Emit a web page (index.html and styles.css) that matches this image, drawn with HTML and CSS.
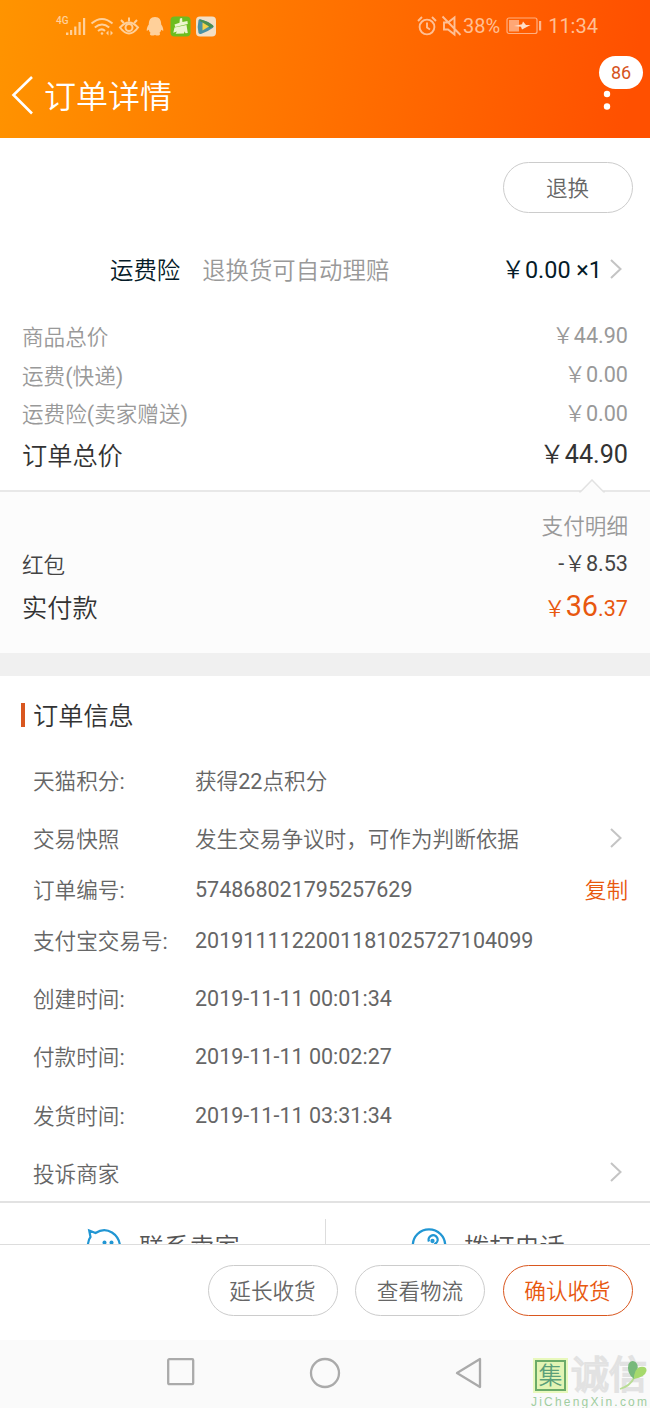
FILE: index.html
```html
<!DOCTYPE html>
<html lang="zh-CN">
<head>
<meta charset="utf-8">
<title>订单详情</title>
<link rel="stylesheet" href="styles.css">
</head>
<body>
<div class="app">
  <header class="header">
    <div class="status">
      <svg class="status-left" width="165" height="24" viewBox="0 0 165 24" fill="none" stroke="#ffd09a">
        <g fill="#ffd09a" stroke="none">
          <rect x="11" y="19.5" width="2.4" height="2.5"/><rect x="15" y="17" width="2.2" height="5"/><rect x="19.200" y="13.500" width="2.200" height="8.500"/><rect x="23.500" y="9" width="2.200" height="13"/><rect x="28" y="5" width="2.200" height="17"/>
        </g>
        <g stroke-width="2">
          <path d="M36.500 10.500q10.500-9 21 0M39.800 14.500q7.200-6 14.400 0M43 18q4-3.200 7 0"/>
          <circle cx="47" cy="20.500" r="1.300" fill="#ffd09a" stroke="none"/>
          <path d="M53.500 17.500v5l-2.500-2.500zM55.500 17.500v5l2.500-2.500z" fill="#ffd09a" stroke="none"/>
          <path d="M65 14.500q9-10 18 0q-9 12-18 0z"/><circle cx="74" cy="14.500" r="3.500"/>
          <path d="M66 7l2.800 3M74 4.500v4M82 7l-2.800 3"/>
        </g>
        <path d="M100 4c-4.500 0-6.200 3-6.200 7.500-1.500 2-2.300 4.300-2 6.500l2-1.200c.3 1.500 1 2.500 1.800 3.200-1.300.8-.8 2.500 1.900 2.500 1.500 0 2.500-.8 2.500-.8s1 .8 2.500.8c2.700 0 3.200-1.700 1.900-2.500.8-.7 1.500-1.700 1.800-3.200l2 1.200c.3-2.200-.5-4.500-2-6.500C106.200 7 104.500 4 100 4z" fill="#ffd09a" stroke="none"/>
        <rect x="115.500" y="3.500" width="20" height="20" rx="4" fill="#6cbd1f" stroke="none"/>
        <path d="M119.500 11.500l5-1.700.4-4.300 2.200-.4.300 4 5-1.200.4 3-12.500 3.200zM119.500 14.500l12-2.600 1.300 8-2.300.3-1-2-.5 2.200-8.400.3 1.300-2.300-3.600 1.300z" fill="#edf5cf" stroke="none"/>
        <rect x="141" y="3.500" width="20" height="20" rx="4" fill="#f3dfc5" stroke="none"/>
        <path d="M143.500 7.200q-1.500 6.500 0 12.800 1 1.500 3 .7 6-2 11.500-6 1-1.200 0-2.400-6-4.500-12.500-6-1.500-.3-2 .9z" fill="#4a91a3" stroke="none"/><path d="M144.500 6.500q7 1 13.500 6l.5 1.500-4 1q-3-4-9-6.500z" fill="#4d8f4b" stroke="none"/><path d="M147.500 9.500v8l6.500-4z" fill="#f2d24a" stroke="none"/>
      </svg>
      <span class="net">4G</span>
      <svg class="alarm" width="46" height="22" viewBox="0 0 46 22" fill="none" stroke="#ffbf94" stroke-width="1.900">
        <circle cx="10" cy="12" r="7.400"/><path d="M10 7.500v5l3 2M1 6l4-4M15 2l4 4"/>
        <path d="M27 7.500h4l6.500-5v17L31 14.500h-4zM25.500 1.500L43.500 20"/>
      </svg>
      <span class="battery-text">38%</span>
      <svg class="battery" width="36" height="18" viewBox="0 0 36 18">
        <rect x="1" y="1" width="30" height="15.500" rx="2" fill="none" stroke="#ffaf80" stroke-width="1.200"/>
        <rect x="3" y="3" width="10" height="11.500" fill="#ffa775"/><path d="M8 9l8-1.800 1-2.700 3 3.500h4.500L16 12.500l-1-2.700z" fill="#ffdfc7"/>
        <rect x="33" y="4" width="2.200" height="9.500" fill="#ffb78c"/>
      </svg>
      <span class="clock">11:34</span>
    </div>
    <div class="titlebar">
      <svg class="back" width="24" height="40" viewBox="0 0 24 40" fill="none" stroke="#fff" stroke-width="2.600"><path d="M21 2L2.500 20 21 38.500"/></svg>
      <h1 class="title">订单详情</h1>
      <svg class="more" width="8" height="34" viewBox="0 0 8 34" fill="#fff"><circle cx="4" cy="4" r="3.200"/><circle cx="4" cy="17" r="3.200"/><circle cx="4" cy="29.500" r="3.200"/></svg>
      <span class="badge">86</span>
    </div>
  </header>

  <div class="refund"><span class="btn">退换</span></div>
  <div class="insurance">
    <span>运费险</span><span class="insurance-note">退换货可自动理赔</span><span class="insurance-price">￥0.00 ×1</span>
    <svg class="arrow" width="12" height="20" viewBox="0 0 12 20"><path d="M1 1l9.500 9L1 19"/></svg>
  </div>

  <section class="costs">
    <div class="cost"><span>商品总价</span><span class="amount">￥44.90</span></div>
    <div class="cost"><span>运费(快递)</span><span class="amount">￥0.00</span></div>
    <div class="cost"><span>运费险(卖家赠送)</span><span class="amount">￥0.00</span></div>
    <div class="cost total"><span>订单总价</span><span class="amount">￥44.90</span></div>
  </section>

  <section class="payment">
    <svg class="notch" width="28" height="14" viewBox="0 0 28 14"><path d="M2 14V12.500L14 1l12 11.500V14z" fill="#fcfcfc"/><path d="M1 12.700h1.500L14 1l11.500 11.700H27" fill="none" stroke="#e2e2e2" stroke-width="1.500"/></svg>
    <div class="detail">支付明细</div>
    <div class="cost dark"><span>红包</span><span class="amount">-￥8.53</span></div>
    <div class="cost paid"><span>实付款</span><span class="amount paid-amount">￥<b class="big">36</b>.37</span></div>
  </section>
  <div class="gap"></div>

  <section class="info">
    <h2 class="info-title">订单信息</h2>
    <div class="row"><span class="label">天猫积分:</span><span>获得22点积分</span></div>
    <div class="row"><span class="label">交易快照</span><span>发生交易争议时，可作为判断依据</span><svg class="arrow" width="12" height="20" viewBox="0 0 12 20"><path d="M1 1l9.500 9L1 19"/></svg></div>
    <div class="row short"><span class="label">订单编号:</span><span class="num">574868021795257629</span><span class="copy">复制</span></div>
    <div class="row"><span class="label">支付宝交易号:</span><span class="num">2019111122001181025727104099</span></div>
    <div class="row"><span class="label">创建时间:</span><span class="num">2019-11-11 00:01:34</span></div>
    <div class="row"><span class="label">付款时间:</span><span class="num">2019-11-11 00:02:27</span></div>
    <div class="row"><span class="label">发货时间:</span><span class="num">2019-11-11 03:31:34</span></div>
    <div class="row"><span class="label">投诉商家</span><svg class="arrow" width="12" height="20" viewBox="0 0 12 20"><path d="M1 1l9.500 9L1 19"/></svg></div>
  </section>

  <div class="contact">
    <div class="contact-item">
      <svg width="36" height="36" viewBox="0 0 36 36" fill="none" stroke="#2196d3" stroke-width="2.200"><path d="M1.800 19Q1.800 12 4.500 9L3.200 2.500 9.500 5Q18-.5 26 4.500 33 9 34 17.500A16 16 0 0 1 2 22"/><g fill="#2196d3" stroke="none"><circle cx="18.500" cy="14.500" r="2"/><circle cx="25.500" cy="14.500" r="2"/></g></svg>
      <span>联系卖家</span>
    </div>
    <div class="contact-item divided">
      <svg width="36" height="36" viewBox="0 0 36 36" fill="none" stroke="#2196d3" stroke-width="2.300"><circle cx="18" cy="17.500" r="16.200"/><path d="M18 13.500a4.500 4.500 0 1 1 6.500 2Q20 22 11 26"/><circle cx="21.500" cy="13" r="1"/></svg>
      <span>拨打电话</span>
    </div>
  </div>

  <div class="actions"><span class="btn">延长收货</span><span class="btn">查看物流</span><span class="btn primary">确认收货</span></div>

  <nav class="nav">
    <svg width="28" height="30" viewBox="0 0 28 30"><rect x="1.200" y="2.200" width="25" height="25" rx="1"/></svg>
    <svg width="32" height="32" viewBox="0 0 32 32"><circle cx="16" cy="16" r="14"/></svg>
    <svg width="28" height="32" viewBox="0 0 28 32"><path d="M25 2v28L2 16z"/></svg>
    <div class="mark">
      <div class="mark-top"><span class="seal">集</span><span class="outline">诚信</span></div>
      <div class="mark-url">JiChengXin.com</div>
      <svg class="leaf" width="32" height="34" viewBox="0 0 32 34"><path d="M3 32Q13 29 17 21" fill="none" stroke="#b9dd94" stroke-width="1.800"/><path d="M17 22Q9 16 11.500 7 14 2 18.500 5 22 8 20 13 18 17 17 22z" fill="#78b97b"/><path d="M17 22Q17 12 23 10q7-1 6.500 4Q28 20 17 22z" fill="#a6d96c"/></svg>
    </div>
  </nav>
</div>
</body>
</html>
```
FILE: styles.css
```css
* { box-sizing: border-box; }
body { margin: 0; background: #fff; font-family: Roboto, "Noto Sans CJK SC DemiLight", "Noto Sans CJK SC", sans-serif; font-size: 21.6px; color: #666; font-weight: 400; }
svg { display: block; flex: none; }
.app { width: 650px; height: 1408px; display: flex; flex-direction: column; overflow: hidden; white-space: nowrap; }
.app > * { flex: none; }

.header { height: 138px; background: linear-gradient(100deg, #ff9400 0%, #ff7300 48%, #ff5000 96%); }
.status { height: 52px; position: relative; display: flex; align-items: center; padding-left: 55px; color: #ffbf94; font-size: 20px; }
.net { position: absolute; left: 56px; top: 15px; font-size: 10px; line-height: 12px; font-weight: 500; color: #ffd09a; }
.status-left { margin: -3px 197px 0 0; }
.alarm { margin: -1px 0 0; }
.battery { margin: 0 6px 0 6px; }
.titlebar { height: 86px; position: relative; display: flex; align-items: center; padding: 0 39px 0 11px; }
.back { margin-top: -1px; }
.title { margin: 4px auto 0 9px; font-size: 32px; line-height: 40px; font-weight: 400; color: #fff; }
.more { margin-top: -3px; }
.badge { position: absolute; left: 599px; top: 4px; width: 44px; height: 33px; border-radius: 17px; background: #fff; color: #d6541c; font-size: 18px; line-height: 34px; text-align: center; }

.btn { width: 130px; height: 51px; border: 1px solid #ccc; border-radius: 26px; text-align: center; line-height: 52px; color: #666; }
.refund { height: 100px; display: flex; justify-content: flex-end; padding: 24px 17.500px 0; }
.insurance { height: 61px; display: flex; align-items: center; padding: 0 28px 0 110px; font-size: 23.4px; color: #051b28; }
.insurance-note { margin-left: 22px; color: #999; }
.insurance-price { margin-left: auto; margin-right: 8px; padding-bottom: 2px; }
.arrow path { fill: none; stroke: #c4c4c4; stroke-width: 2; }

.costs { height: 191px; padding-top: 17px; }
.cost { height: 38.700px; padding: 0 22px; display: flex; justify-content: space-between; align-items: center; color: #999; }
.amount { padding-bottom: 3px; }
.total { height: 43px; font-size: 25.200px; color: #333; }
.payment { position: relative; height: 163px; border-top: 2px solid #e8e8e8; background: #fcfcfc; padding-top: 14px; }
.notch { position: absolute; left: 578px; top: -13px; }
.detail { height: 38px; line-height: 41px; padding-right: 22px; text-align: right; color: #999; }
.dark { color: #444; }
.paid { height: 46px; font-size: 25.200px; color: #333; }
.paid-amount { font-size: 21.600px; color: #e8580f; padding-bottom: 0; }
.big { font-size: 28.800px; font-weight: 400; }
.gap { height: 23px; background: #f0f0f0; }

.info { height: 527px; border-bottom: 2px solid #e2e2e2; }
.info-title { margin: 27px 0 25px 21px; height: 24px; border-left: 4px solid #d9571f; padding-left: 8px; font-size: 25.200px; line-height: 28px; font-weight: 400; color: #333; }
.row { height: 58.300px; display: flex; align-items: center; padding: 0 28px 0 33px; }
.row span { padding-bottom: 3px; }
.row .label { width: 162px; }
.row .num { padding-bottom: 1px; font-size: 21.500px; }
.row .arrow { margin: -3px 0 0 auto; }
.short { height: 43px; padding-right: 22px; }
.row .copy { margin-left: auto; color: #e8580f; }

.contact { height: 41px; display: flex; overflow: hidden; }
.contact-item { width: 325px; height: 82px; padding-left: 86px; display: flex; align-items: flex-start; gap: 17px; font-size: 25.200px; color: #555; }
.contact-item svg { margin-top: 25px; }
.contact-item span { line-height: 36px; margin-top: 27px; }
.divided { border-left: 1px solid #ddd; margin-top: 16px; padding-left: 85px; }
.divided svg { margin-top: 9px; }
.divided span { margin-top: 11px; }

.actions { height: 96px; border-top: 1px solid #ddd; display: flex; justify-content: flex-end; gap: 17.500px; padding: 20px 17.500px 0; }
.primary { border-color: #d9571f; color: #e8580f; }

.nav { height: 68px; background: #fafafa; display: flex; padding: 17px 0 0 167px; }
.nav > svg { fill: none; stroke: #aaa; stroke-width: 2.300; stroke-linejoin: round; }
.nav > svg + svg { margin-left: 114px; }
.nav > svg + svg + svg { margin-left: 114px; }
.mark { position: relative; margin-left: 48px; width: 120px; }
.mark-top { display: flex; align-items: center; height: 36px; padding-left: 4px; }
.seal { width: 31px; height: 31px; border: 2px solid #6bab68; outline: 2px solid #e8f8bc; background: #e2f4b4; color: #5b9f79; font-size: 24px; line-height: 28px; text-align: center; }
.outline { margin-left: 5px; font-size: 38px; line-height: 36px; font-weight: 700; color: #fcfcfc; -webkit-text-stroke: 1px #e2e2e2; }
.mark-url { font-family: "Liberation Sans", sans-serif; font-size: 12px; line-height: 14px; letter-spacing: 2.200px; color: #a0cda0; margin-top: 2px; }
.leaf { position: absolute; left: 86px; top: 0; }
```
